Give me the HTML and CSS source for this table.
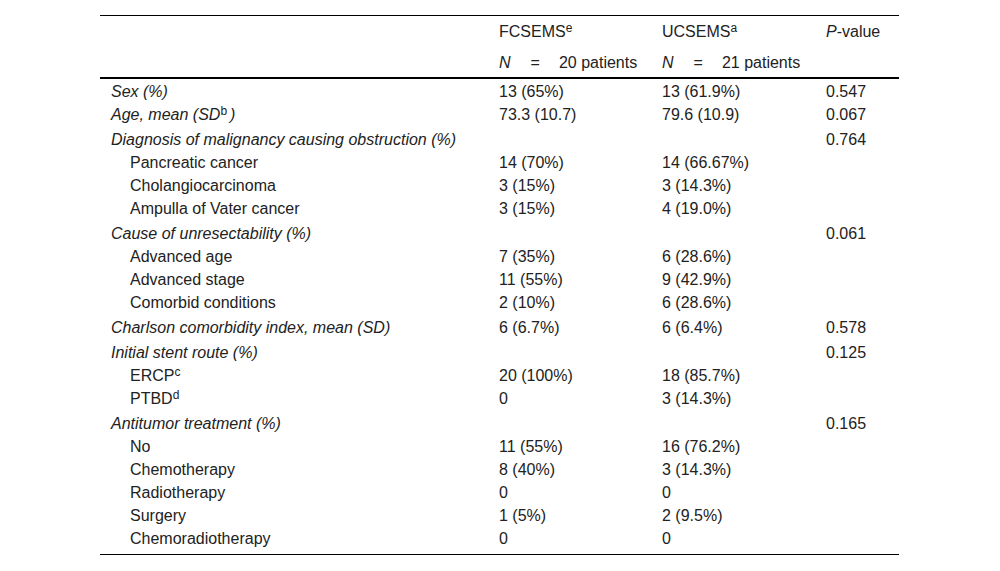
FILE: index.html
```html
<!DOCTYPE html>
<html lang="en">
<head>
<meta charset="utf-8">
<title>Table</title>
<link rel="stylesheet" href="styles.css">
</head>
<body>
<table class="data">
  <colgroup>
    <col class="c-label">
    <col class="c-fc">
    <col class="c-uc">
    <col class="c-p">
  </colgroup>
  <thead>
    <tr class="h1">
      <th></th>
      <th>FCSEMS<sup>e</sup></th>
      <th>UCSEMS<sup>a</sup></th>
      <th><i>P</i>-value</th>
    </tr>
    <tr class="h2">
      <th></th>
      <th><i>N</i><span class="eq">=</span>20 patients</th>
      <th><i>N</i><span class="eq">=</span>21 patients</th>
      <th></th>
    </tr>
  </thead>
  <tbody>
    <tr><td class="cat">Sex (%)</td><td>13 (65%)</td><td>13 (61.9%)</td><td>0.547</td></tr>
    <tr><td class="cat">Age, mean (SD<sup class="gap">b</sup>)</td><td>73.3 (10.7)</td><td>79.6 (10.9)</td><td>0.067</td></tr>
    <tr class="grp"><td class="cat">Diagnosis of malignancy causing obstruction (%)</td><td></td><td></td><td>0.764</td></tr>
    <tr><td class="sub">Pancreatic cancer</td><td>14 (70%)</td><td>14 (66.67%)</td><td></td></tr>
    <tr><td class="sub">Cholangiocarcinoma</td><td>3 (15%)</td><td>3 (14.3%)</td><td></td></tr>
    <tr><td class="sub">Ampulla of Vater cancer</td><td>3 (15%)</td><td>4 (19.0%)</td><td></td></tr>
    <tr class="grp"><td class="cat">Cause of unresectability (%)</td><td></td><td></td><td>0.061</td></tr>
    <tr><td class="sub">Advanced age</td><td>7 (35%)</td><td>6 (28.6%)</td><td></td></tr>
    <tr><td class="sub">Advanced stage</td><td>11 (55%)</td><td>9 (42.9%)</td><td></td></tr>
    <tr><td class="sub">Comorbid conditions</td><td>2 (10%)</td><td>6 (28.6%)</td><td></td></tr>
    <tr class="grp"><td class="cat">Charlson comorbidity index, mean (SD)</td><td>6 (6.7%)</td><td>6 (6.4%)</td><td>0.578</td></tr>
    <tr class="grp"><td class="cat">Initial stent route (%)</td><td></td><td></td><td>0.125</td></tr>
    <tr><td class="sub">ERCP<sup>c</sup></td><td>20 (100%)</td><td>18 (85.7%)</td><td></td></tr>
    <tr><td class="sub">PTBD<sup>d</sup></td><td>0</td><td>3 (14.3%)</td><td></td></tr>
    <tr class="grp"><td class="cat">Antitumor treatment (%)</td><td></td><td></td><td>0.165</td></tr>
    <tr><td class="sub">No</td><td>11 (55%)</td><td>16 (76.2%)</td><td></td></tr>
    <tr><td class="sub">Chemotherapy</td><td>8 (40%)</td><td>3 (14.3%)</td><td></td></tr>
    <tr><td class="sub">Radiotherapy</td><td>0</td><td>0</td><td></td></tr>
    <tr><td class="sub">Surgery</td><td>1 (5%)</td><td>2 (9.5%)</td><td></td></tr>
    <tr class="last"><td class="sub">Chemoradiotherapy</td><td>0</td><td>0</td><td></td></tr>
  </tbody>
</table>
</body>
</html>
```
FILE: styles.css
```css
html, body {
  margin: 0;
  background: #ffffff;
}
body {
  padding: 15px 0 0 100px;
  font-family: "Liberation Sans", Arial, sans-serif;
  font-size: 16px;
  color: #222222;
}
.data {
  width: 799px;
  border-collapse: collapse;
  table-layout: fixed;
  border-top: 1px solid #000;
  border-bottom: 1px solid #000;
}
.c-label { width: 389px; }
.c-fc { width: 163px; }
.c-uc { width: 164px; }
.c-p { width: 83px; }

.data th,
.data td {
  text-align: left;
  font-weight: normal;
  line-height: 19px;
  padding: 3px 0 1px 10px;
  vertical-align: top;
  white-space: nowrap;
}
.data th:first-child,
.data td.cat {
  padding-left: 11px;
}
.data thead .h1 th {
  padding-top: 6px;
  padding-bottom: 5px;
}
.data thead .h2 th {
  padding-top: 7px;
  padding-bottom: 5px;
  border-bottom: 2px solid #000;
}
.data sup {
  font-size: 12px;
  font-style: normal;
  line-height: 0;
  vertical-align: 5px;
}
.data sup.gap {
  margin-right: 3px;
}
.eq {
  display: inline-block;
  margin: 0 19px 0 20px;
}
.cat {
  font-style: italic;
}
.data td.sub {
  padding-left: 30px;
}
.data tr.grp td {
  padding-top: 5px;
}
.data tr.last td {
  padding-bottom: 6px;
}
```
